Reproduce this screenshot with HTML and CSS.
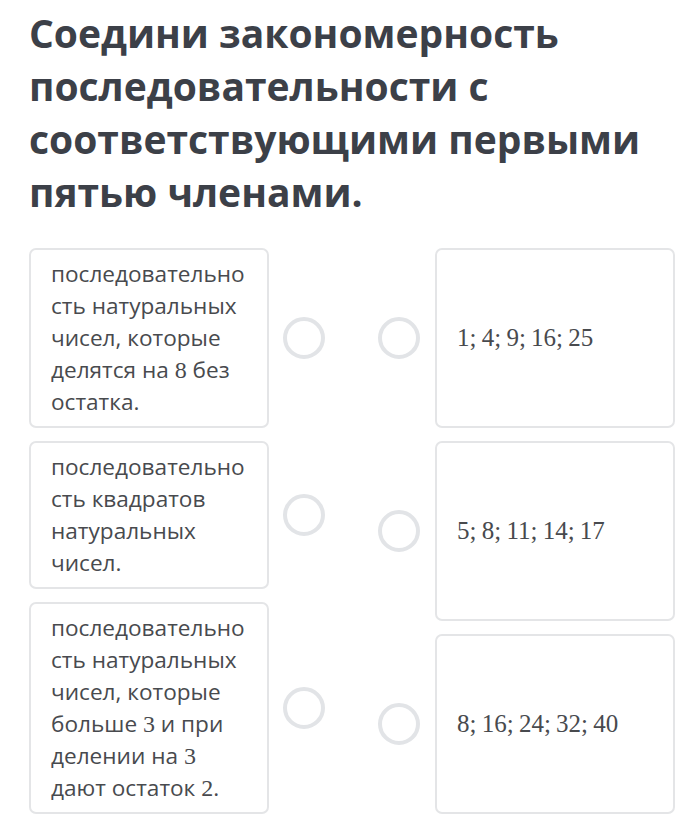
FILE: index.html
```html
<!DOCTYPE html>
<html lang="ru">
<head>
<meta charset="utf-8">
<link rel="stylesheet" href="styles.css">
</head>
<body>
<main class="task">
  <h1 class="title">Соедини закономерность последовательности с соответствующими первыми пятью членами.</h1>
  <div class="match">
    <div class="col col-left">
      <div class="item">
        <div class="card">последовательность натуральных чисел, которые делятся на <span class="m">8</span> без остатка.</div>
        <span class="dot"></span>
      </div>
      <div class="item">
        <div class="card">последовательность квадратов натуральных чисел.</div>
        <span class="dot"></span>
      </div>
      <div class="item">
        <div class="card">последовательность натуральных чисел, которые больше <span class="m">3</span> и при делении на <span class="m">3</span> дают остаток <span class="m">2</span>.</div>
        <span class="dot"></span>
      </div>
    </div>
    <div class="col col-right">
      <div class="item">
        <span class="dot"></span>
        <div class="card card-math"><span class="m">1; 4; 9; 16; 25</span></div>
      </div>
      <div class="item">
        <span class="dot"></span>
        <div class="card card-math"><span class="m">5; 8; 11; 14; 17</span></div>
      </div>
      <div class="item">
        <span class="dot"></span>
        <div class="card card-math"><span class="m">8; 16; 24; 32; 40</span></div>
      </div>
    </div>
  </div>
</main>
</body>
</html>
```
FILE: styles.css
```css
* { box-sizing: border-box; }
html, body { margin: 0; padding: 0; background: #fff; }
body { font-family: "Open Sans", "Noto Sans", sans-serif; }

.task { padding: 6px 14px 0 29px; }

.title {
  margin: 0;
  font-size: 39px;
  line-height: 53px;
  font-weight: 700;
  color: #3c4048;
}

.match {
  display: flex;
  justify-content: space-between;
  margin-top: 30px;
  padding-right: 1px;
}

.col {
  display: flex;
  flex-direction: column;
  gap: 13px;
}

.item {
  display: flex;
  align-items: center;
}
.col-left .item { gap: 14px; }
.col-right .item { gap: 15px; }

.card {
  width: 240px;
  border: 2px solid #e4e5e7;
  border-radius: 7px;
  background: #fff;
  color: #484a4e;
  font-size: 22.6px;
  line-height: 32px;
  padding: 8px 14px 8px 20px;
  overflow-wrap: anywhere;
}

.card-math {
  min-height: 180px;
  display: flex;
  align-items: center;
  overflow-wrap: normal;
}

.m {
  font-family: "Liberation Serif", "DejaVu Serif", serif;
  font-size: 24px;
  line-height: 20px;
}
.card-math .m { font-size: 25px; line-height: 32px; word-spacing: -1px; }

.dot {
  flex: none;
  width: 42px;
  height: 42px;
  border: 4px solid #e2e4e7;
  border-radius: 50%;
}
```
